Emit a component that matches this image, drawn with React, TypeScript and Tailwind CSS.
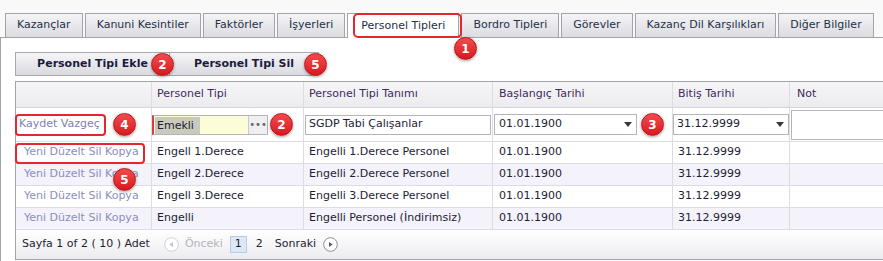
import React from "react";

const TABS = [
  "Kazançlar",
  "Kanuni Kesintiler",
  "Faktörler",
  "İşyerleri",
  "Personel Tipleri",
  "Bordro Tipleri",
  "Görevler",
  "Kazanç Dil Karşılıkları",
  "Diğer Bilgiler",
];
const ACTIVE_TAB = "Personel Tipleri";

const ROWS = [
  { tip: "Engell 1.Derece", tanim: "Engelli 1.Derece Personel" },
  { tip: "Engell 2.Derece", tanim: "Engelli 2.Derece Personel" },
  { tip: "Engell 3.Derece", tanim: "Engelli 3.Derece Personel" },
  { tip: "Engelli", tanim: "Engelli Personel (İndirimsiz)" },
];

const COLS = "grid grid-cols-[136px_152px_189px_180px_117px_140px]";

// numbered red markers from the annotated screenshot
const Badge = ({ n, className }: { n: number; className: string }) => (
  <span
    className={`absolute z-20 flex h-[23px] w-[23px] items-center justify-center rounded-full border border-[#b5161c] bg-linear-to-b from-[#f5494c] to-[#d5161e] text-[12px] font-bold text-white shadow-[0_1px_3px_rgba(0,0,0,0.35)] ${className}`}
  >
    {n}
  </span>
);

const Caret = () => (
  <svg width="8" height="5" viewBox="0 0 8 5" className="shrink-0">
    <path d="M0 0h8L4 5z" fill="#3a3a3a" />
  </svg>
);

const Arrow = ({ dir, disabled }: { dir: "l" | "r"; disabled?: boolean }) => (
  <svg width="15" height="15" viewBox="0 0 15 15">
    <circle cx="7.5" cy="7.5" r="6.8" fill="#fff" stroke={disabled ? "#cfcfd6" : "#8c8c95"} />
    <path
      d={dir === "l" ? "M5.3 7.5 9 5v5z" : "M9.7 7.5 6 5v5z"}
      fill={disabled ? "#c4c4cc" : "#5c5c66"}
    />
  </svg>
);

const Cell = ({ children, className = "" }: { children?: React.ReactNode; className?: string }) => (
  <div className={`flex items-center overflow-hidden whitespace-nowrap border-r border-[#dcdce3] ${className}`}>
    {children}
  </div>
);

export default function App() {
  return (
    <div className="relative h-[261px] w-[883px] overflow-hidden bg-[#f9f9f9] font-['DejaVu_Sans',sans-serif] text-[11px] text-[#1d1d33]">
      {/* tabs */}
      <div className="relative -mb-px flex items-start gap-[2px] pl-[5px] pt-[13px]">
        {TABS.map((t) =>
          t === ACTIVE_TAB ? (
            <div
              key={t}
              className="relative z-10 flex h-[25px] shrink-0 items-center border border-b-0 border-[#a3a3ab] bg-white px-[13px] text-[#24304a]"
            >
              {t}
            </div>
          ) : (
            <div
              key={t}
              className="flex h-[24px] shrink-0 items-center border border-b-0 border-[#a3a3ab] bg-linear-to-b from-[#f4f4f6] to-[#dcdce1] px-[11px] text-[#24304a]"
            >
              {t}
            </div>
          )
        )}
      </div>

      {/* panel */}
      <div className="h-full border-l border-t border-[#a3a3ab] bg-white pl-[14px] pt-[14px]">
        <div className="flex">
          <button className="h-[24px] w-[155px] border border-[#a9a9b1] bg-linear-to-b from-[#f6f6f8] to-[#dadadf] font-bold text-[#1b1b3d]">
            Personel Tipi Ekle
          </button>
          <button className="-ml-px h-[24px] w-[150px] border border-[#a9a9b1] bg-linear-to-b from-[#f6f6f8] to-[#dadadf] font-bold text-[#1b1b3d]">
            Personel Tipi Sil
          </button>
        </div>

        {/* grid */}
        <div className="mt-[5px] w-[920px] border-l border-t border-[#a3a3ab]">
          <div className={`${COLS} h-[26px] border-b border-[#d4d4dc] bg-linear-to-b from-[#f6f6f8] to-[#ececef] text-[#3f2a5c]`}>
            <Cell />
            <Cell className="pl-[5px]">Personel Tipi</Cell>
            <Cell className="pl-[5px]">Personel Tipi Tanımı</Cell>
            <Cell className="pl-[6px]">Başlangıç Tarihi</Cell>
            <Cell className="pl-[5px]">Bitiş Tarihi</Cell>
            <Cell className="pl-[7px]">Not</Cell>
          </div>

          {/* edit row */}
          <div className={`${COLS} h-[34px] border-b border-[#dcdce3] bg-white`}>
            <Cell className="pl-[3px] text-[#7c81b2]">Kaydet Vazgeç</Cell>
            <Cell>
              <div className="flex h-[20px] w-[116px] border border-l-2 border-[#b4b4bc] border-l-[#e0393e] bg-[#fcfcd9]">
                <span className="ml-[1px] mt-px h-[17px] bg-[#c9c9bc] pl-[2px] pr-[6px] leading-[17px]">Emekli</span>
                <span className="ml-auto flex w-[19px] items-center justify-center border-l border-[#c8c8ce] bg-[#efeff1] text-[10px] leading-none text-[#666]">
                  •••
                </span>
              </div>
            </Cell>
            <Cell className="pl-px">
              <div className="flex h-[20px] w-[186px] items-center border border-[#b4b4bc] bg-white pl-[3px]">SGDP Tabi Çalışanlar</div>
            </Cell>
            <Cell className="pl-px">
              <div className="flex h-[21px] w-[143px] items-center justify-between border border-[#b4b4bc] bg-white pl-[4px] pr-[4px]">
                01.01.1900
                <Caret />
              </div>
            </Cell>
            <Cell>
              <div className="flex h-[21px] w-[116px] items-center justify-between border border-[#b4b4bc] bg-white pl-[3px] pr-[4px]">
                31.12.9999
                <Caret />
              </div>
            </Cell>
            <Cell className="pl-px">
              <div className="h-[30px] w-[130px] border border-[#b4b4bc] bg-white" />
            </Cell>
          </div>

          {ROWS.map((r, i) => (
            <div
              key={r.tip}
              className={`${COLS} h-[22px] border-b border-[#dcdce3] ${i % 2 === 1 ? "bg-[#f4f2fb]" : "bg-white"}`}
            >
              <Cell className="pl-[8px] text-[#8a8fbb]">Yeni Düzelt Sil Kopya</Cell>
              <Cell className="pl-[5px]">{r.tip}</Cell>
              <Cell className="pl-[5px]">{r.tanim}</Cell>
              <Cell className="pl-[6px]">01.01.1900</Cell>
              <Cell className="pl-[5px]">31.12.9999</Cell>
              <Cell />
            </div>
          ))}

          {/* pager */}
          <div className="flex h-[30px] items-center border-b border-[#a3a3ab] bg-linear-to-b from-white to-[#ececf0] pl-[6px]">
            <span>Sayfa 1 of 2 ( 10 ) Adet</span>
            <span className="ml-[14px]">
              <Arrow dir="l" disabled />
            </span>
            <span className="ml-[6px] text-[#b3b3bb]">Önceki</span>
            <span className="ml-[7px] flex h-[17px] w-[17px] items-center justify-center border border-[#b8cbe6] bg-[#dde8f7]">1</span>
            <span className="ml-[9px]">2</span>
            <span className="ml-[12px]">Sonraki</span>
            <span className="ml-[7px]">
              <Arrow dir="r" />
            </span>
          </div>
        </div>
      </div>

      {/* annotation frames */}
      <div className="absolute left-[353px] top-[13px] z-20 h-[25px] w-[109px] rounded-[5px] border-2 border-[#e5262c]" />
      <div className="absolute left-[15px] top-[114px] z-20 h-[22px] w-[91px] rounded-[4px] border-2 border-[#e5262c]" />
      <div className="absolute left-[15px] top-[143px] z-20 h-[21px] w-[130px] rounded-[4px] border-2 border-[#e5262c]" />

      <Badge n={1} className="left-[454px] top-[37px]" />
      <Badge n={2} className="left-[151px] top-[53px]" />
      <Badge n={5} className="left-[304px] top-[53px]" />
      <Badge n={4} className="left-[113px] top-[113px]" />
      <Badge n={2} className="left-[270px] top-[113px]" />
      <Badge n={3} className="left-[641px] top-[113px]" />
      <Badge n={5} className="left-[113px] top-[168px]" />
    </div>
  );
}
